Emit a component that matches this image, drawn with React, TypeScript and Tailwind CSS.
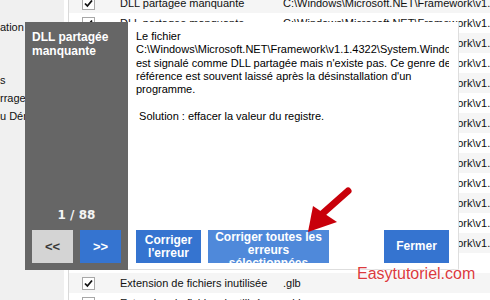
const LIST_FONT = "font-['Liberation_Sans',Arial,sans-serif]";

type Row = { name?: string; path?: string; checked?: boolean };

const rows: Row[] = [
  ...Array.from({ length: 6 }, () => ({
    name: "DLL partagee manquante",
    path: "C:\\Windows\\Microsoft.NET\\Framework\\v1.1.4322\\System.Windows.Forms.dll",
    checked: true,
  })),
  ...Array.from({ length: 7 }, () => ({
    name: "DLL partagee manquante",
    path: "C:\\Windows\\Microsoft.NET\\Framework\\v1.0.3705\\System.Data.dll",
    checked: true,
  })),
  {},
  { name: "Extension de fichiers inutilisée", path: ".glb", checked: true },
  { name: "Extension de fichiers inutilisée", path: ".gid", checked: true },
];

function Check() {
  return (
    <div className="w-[13px] h-[13px] shrink-0 border border-[#a8a8a8] bg-white flex items-center justify-center">
      <svg width="9" height="9" viewBox="0 0 9 9">
        <path d="M1 4.5 L3.4 7 L8 1.5" fill="none" stroke="#111" strokeWidth="1.8" />
      </svg>
    </div>
  );
}

export default function App() {
  return (
    <div className={`relative w-[490px] h-[300px] overflow-hidden bg-white text-[11px] text-[#111] ${LIST_FONT}`}>
      {/* Background window */}
      <div className="flex h-full">
        <div className="w-[64px] shrink-0 bg-[#f0f0f0] flex flex-col leading-[18px] whitespace-nowrap overflow-hidden">
          <div className="mt-[18px]">ation</div>
          <div className="mt-[35px]">s</div>
          <div>rrage</div>
          <div>u Démarrage</div>
        </div>
        <div className="w-[4px] shrink-0 bg-white" />
        <div className="flex-1 border-l border-[#d9d9d9] flex flex-col -mt-[7px] overflow-hidden">
          {rows.map((r, i) => (
            <div key={i}
              className={`h-[20px] shrink-0 flex items-center pl-[13px] whitespace-nowrap ${i % 2 === 0 ? 'bg-[#f5f5f5]' : 'bg-white'}`}>
              {r.name && (
                <>
                  <Check />
                  <div className="w-[163px] ml-[25px] shrink-0">{r.name}</div>
                  <div>{r.path}</div>
                </>
              )}
            </div>
          ))}
        </div>
      </div>

      {/* Error detail dialog */}
      <div className="absolute left-[25px] top-[22px] w-[434px] h-[248px] flex">
        <div className="w-[103px] shrink-0 bg-[#666666] flex flex-col px-[7px] pt-[8px] pb-[7px]">
          <div className="text-white font-bold text-[12px] leading-[14px]">
            DLL partagée manquante
          </div>
          <div className="flex-1" />
          <div className="text-center text-[#f4f4f4] font-bold text-[12px] leading-[14px] mb-[8px] font-['DejaVu_Sans',sans-serif]">
            1 / 88
          </div>
          <div className="flex gap-[7px]">
            <button className="w-[41px] h-[33px] bg-[#d4d4d4] text-[#3a3a3a] font-bold text-[13px] flex items-center justify-center">
              &lt;&lt;
            </button>
            <button className="w-[41px] h-[33px] bg-[#3574d0] text-white font-bold text-[13px] flex items-center justify-center">
              &gt;&gt;
            </button>
          </div>
        </div>

        <div className="flex-1 min-w-0 bg-white border-r border-b border-[#dedede] flex flex-col pl-[8px] pr-[9px] pt-[8px] pb-[6px]">
          <div className="text-[11px] leading-[13.33px] text-black whitespace-pre overflow-hidden">
            <div>Le fichier</div>
            <div className="overflow-hidden">C:\Windows\Microsoft.NET\Framework\v1.1.4322\System.Windows.Forms.dll</div>
            <div>est signalé comme DLL partagée mais n'existe pas. Ce genre de</div>
            <div>référence est souvent laissé après la désinstallation d'un</div>
            <div>programme.</div>
            <div>&nbsp;</div>
            <div> Solution : effacer la valeur du registre.</div>
          </div>
          <div className="flex-1" />
          <div className="flex gap-[7px] h-[33px] text-white font-bold text-[12px] leading-[13px]">
            <button className="w-[65px] bg-[#3574d0] flex items-center justify-center text-center">
              Corriger<br />l'erreur
            </button>
            <button className="w-[121px] bg-[#4f89da] overflow-hidden text-center pt-[1px] flex flex-col items-center">
              <span>Corriger toutes les</span>
              <span>erreurs</span>
              <span>sélectionnées</span>
            </button>
            <div className="flex-1" />
            <button className="w-[65px] bg-[#3574d0] flex items-center justify-center">
              Fermer
            </button>
          </div>
        </div>
      </div>

      {/* Tutorial annotation arrow */}
      <svg className="absolute left-[295px] top-[185px]" width="60" height="55" viewBox="0 0 60 55">
        <line x1="53" y1="6" x2="27" y2="29" stroke="#c8000a" strokeWidth="7" strokeLinecap="round" />
        <polygon points="13,47 18,21 42,37" fill="#c8000a" />
      </svg>

      {/* Watermark */}
      <div className="absolute left-[357px] top-[266px] text-[16px] leading-[16px] text-[#db3a3e] [text-shadow:0_0_2px_#fff,0_0_2px_#fff,0_0_1px_#fff]">
        Easytutoriel.com
      </div>
    </div>
  );
}
